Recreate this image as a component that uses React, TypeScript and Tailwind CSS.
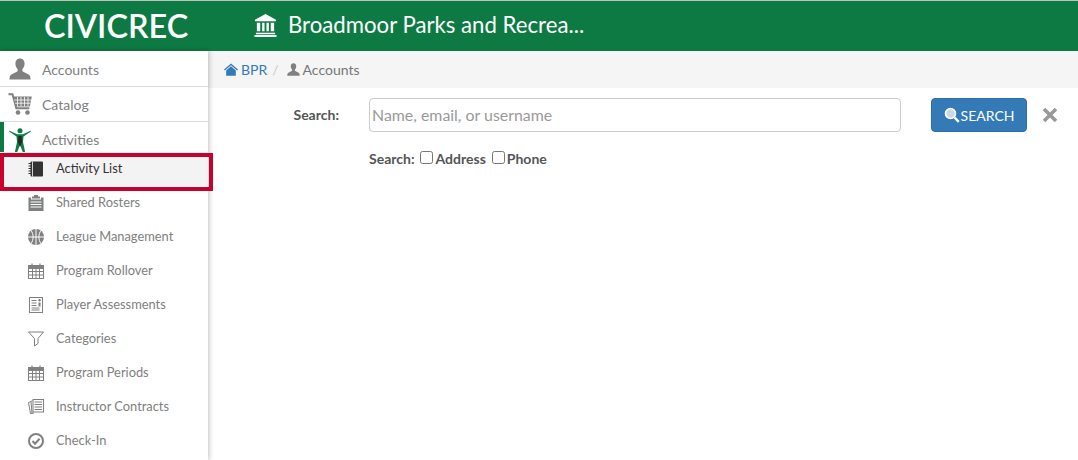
import React from "react";

const G = "#808080";

const Person = ({ className, fill = G }: { className?: string; fill?: string }) => (
  <svg viewBox="0 0 24 24" className={className} fill={fill}>
    <path d="M12 0.500c-3.200 0-5 2.400-5 5.600 0 2.400 1 4.800 2.400 6.200v2.100L2.600 18C1.200 18.800 0.600 20 0.500 23.500h23c-.1-3.500-.7-4.700-2.100-5.500l-6.800-3.600v-2.100C16 10.900 17 8.500 17 6.100 17 2.900 15.200 0.500 12 0.500z" />
  </svg>
);

const Cart = ({ className }: { className?: string }) => (
  <svg viewBox="0 0 24 22" className={className} fill="none" stroke={G}>
    <path d="M0.500 1.200h4l.9 3.300 2.900 10.800h13" strokeWidth="2" />
    <path d="M5 3.500h18.800l-2 10H7.700z" fill={G} stroke="none" />
    <path d="M6 7h17M7 10.200h15.500M9.500 4v9.500M13 4v9.500M16.500 4v9.500M20 4v9.500" stroke="#ffffff" strokeWidth="0.800" />
    <circle cx="10" cy="19.500" r="2.300" fill={G} stroke="none" />
    <circle cx="19.500" cy="19.500" r="2.300" fill={G} stroke="none" />
  </svg>
);

const Figure = ({ className }: { className?: string }) => (
  <svg viewBox="0 0 22 26" className={className}>
    <circle cx="11" cy="2.800" r="2.500" fill="#0d7a43" />
    <path d="M0.200 3.500 L7.500 8.500 L8 14 L5.500 26 H7.500 L11 17 L14.500 26 H16.500 L14 14 L14.500 8.500 L21.800 3.500 L21.500 2.800 L14 6.300 H8 L0.500 2.800 Z" fill="#0d7a43" />
    <path d="M9.400 8h3.200l.4 6-2 5-2-5z" fill="#1d2b22" />
  </svg>
);

const Notebook = () => (
  <svg viewBox="0 0 16 16" className="w-4 h-4">
    <rect x="2.500" y="0.500" width="12.500" height="15" rx="1" fill="#333333" />
    <path d="M0.500 2.500h3.500M0.500 5h3.500M0.500 7.500h3.500M0.500 10h3.500M0.500 12.500h3.500" stroke="#333333" strokeWidth="1.200" />
    <path d="M4.500 0.500v15" stroke="#ffffff" strokeWidth="0.800" />
  </svg>
);

const Clipboard = () => (
  <svg viewBox="0 0 16 16" className="w-4 h-4" fill={G}>
    <path d="M6 0h4v1.500h2v2H4v-2h2z" />
    <path d="M0.500 2.500h2.500v2h10v-2h2.500V16H0.500z" />
    <path d="M2.500 7h11M2.500 9.500h11M2.500 12h11" stroke="#ffffff" strokeWidth="1" />
  </svg>
);

const Ball = () => (
  <svg viewBox="0 0 16 16" className="w-4 h-4">
    <circle cx="8" cy="8" r="8" fill={G} />
    <path d="M8 0v16M0 8h16M3 1.500c2.800 3.300 2.800 9.700 0 13M13 1.500c-2.800 3.300-2.800 9.700 0 13" stroke="#ffffff" strokeWidth="1" fill="none" />
  </svg>
);

const Calendar = () => (
  <svg viewBox="0 0 16 16" className="w-4 h-4" fill="none" stroke={G}>
    <rect x="0.500" y="2.500" width="15" height="13" strokeWidth="1" />
    <path d="M0.500 3h15v2.500H0.500z" fill={G} strokeWidth="1" />
    <path d="M4 0.500v3M12 0.500v3" strokeWidth="1.200" />
    <path d="M0.500 8.500h15M0.500 12h15M4.500 5.500v10M8 5.500v10M11.500 5.500v10" strokeWidth="1" />
  </svg>
);

const Assess = () => (
  <svg viewBox="0 0 16 16" className="w-4 h-4" fill="none" stroke={G}>
    <rect x="1.500" y="0.500" width="13" height="15" strokeWidth="1" />
    <path d="M3.500 3.500h5M3.500 6h5M3.500 8.500h5M3.500 11h8M3.500 13h8" strokeWidth="1" />
    <circle cx="11.500" cy="3.300" r="1.200" fill={G} stroke="none" />
    <path d="M10.500 5.500h2v4h-2z" fill={G} stroke="none" />
  </svg>
);

const Funnel = () => (
  <svg viewBox="0 0 16 16" className="w-4 h-4" fill="none" stroke={G} strokeWidth="1">
    <path d="M0.500 1h15L10 7.500v5L6.500 15V7.500z" />
  </svg>
);

const Contracts = () => (
  <svg viewBox="0 0 16 16" className="w-4 h-4" fill="none" stroke={G} strokeWidth="1">
    <path d="M3 2.500L0.500 3.500 2.500 14.500 6 14" />
    <path d="M4.500 1.500L3 2.500 4 14.500" />
    <rect x="5" y="0.500" width="10.500" height="12.500" fill="#ffffff" />
    <path d="M6.500 3h7.500M6.500 5.500h7.500M6.500 8h7.500M6.500 10.500h7.500" />
  </svg>
);

const Check = () => (
  <svg viewBox="0 0 16 16" className="w-4 h-4" fill="none" stroke={G}>
    <circle cx="8" cy="8" r="7" strokeWidth="2" />
    <path d="M4.500 8l2.500 2.700 4.600-5" strokeWidth="2" />
  </svg>
);

const Bank = () => (
  <svg viewBox="0 0 24 24" className="w-[23px] h-[23px]" fill="#ffffff">
    <path d="M12 0L23 6v1.500H1V6z" />
    <path d="M3 9h3.500v9H3zM8.500 9H11v9H8.500zM13 9h2.500v9H13zM17.500 9H21v9h-3.500z" />
    <path d="M2 19.500h20V21H2zM0.500 22H23.500v2H0.500z" />
  </svg>
);

const Home = () => (
  <svg viewBox="0 0 16 14" className="w-[14px] h-[13px]" fill="#337ab7">
    <path d="M8 0L16 7 15 8 8 2 1 8 0 7z" />
    <path d="M2.500 8L8 3.300 13.500 8v6h-11z" />
  </svg>
);

const Loupe = () => (
  <svg viewBox="0 0 16 16" className="w-4 h-4" fill="none" stroke="#ffffff">
    <circle cx="6.500" cy="6.500" r="5" strokeWidth="1.600" fill="#c9d9ea" />
    <path d="M10.500 10.500l4.300 4.300" strokeWidth="2.400" />
  </svg>
);

const subItems: [string, React.ReactNode][] = [
  ["Shared Rosters", <Clipboard />],
  ["League Management", <Ball />],
  ["Program Rollover", <Calendar />],
  ["Player Assessments", <Assess />],
  ["Categories", <Funnel />],
  ["Program Periods", <Calendar />],
  ["Instructor Contracts", <Contracts />],
  ["Check-In", <Check />],
];

export default function App() {
  return (
    <div
      className="flex flex-col h-[460px] w-[1078px] overflow-hidden bg-white text-[14px] text-[#777777]"
      style={{ fontFamily: "Lato, sans-serif" }}
    >
      <header className="flex items-center h-[51px] shrink-0 border-t border-[#b9c4bd] bg-[#0d7a43] text-white">
        <div className="w-[254px] pl-[44px] shrink-0 text-[32.4px] font-semibold leading-none">CIVICREC</div>
        <div className="flex items-center gap-[11px] mb-[2px]">
          <Bank />
          <span className="text-[22.2px] leading-none">Broadmoor Parks and Recrea...</span>
        </div>
      </header>
      <div className="flex flex-1 min-h-0">
        <aside className="w-[208px] shrink-0 shadow-[1px_0_5px_rgba(0,0,0,0.25)] z-10 bg-white text-[#808080]">
          <div className="flex items-center h-[36px] border-b border-[#dddddd]">
            <span className="w-[42px] flex justify-start pl-[9px] shrink-0"><Person className="w-[22px] h-[22px]" /></span>
            <span className="pt-[2px]">Accounts</span>
          </div>
          <div className="flex items-center h-[35px] border-b border-[#dddddd]">
            <span className="w-[42px] flex justify-start pl-[8px] shrink-0"><Cart className="w-[24px] h-[22px]" /></span>
            <span>Catalog</span>
          </div>
          <div className="flex items-start h-[30px] border-l-4 border-[#0d7a43] overflow-hidden">
            <span className="w-[38px] flex justify-start pt-[6px] pl-[5px] shrink-0"><Figure className="w-[22px] h-[26px]" /></span>
            <span className="pt-[7px]">Activities</span>
          </div>
          <div className="relative flex items-center h-[34px] pl-[28px] bg-[#f3f3f3] text-[#333333] font-normal">
            <span className="w-[28px] shrink-0"><Notebook /></span>
            <span className="text-[12.85px]">Activity List</span>
            <div className="absolute left-0 top-[1px] w-[213px] h-[38px] border-4 border-[#c8002d]"></div>
          </div>
          {subItems.map(([label, icon]) => (
            <div key={label} className="flex items-center h-[34px] pl-[28px]">
              <span className="w-[28px] shrink-0">{icon}</span>
              <span className="text-[12.85px]">{label}</span>
            </div>
          ))}
        </aside>
        <main className="flex-1 min-w-0">
          <nav className="flex items-center h-[37px] bg-[#f5f5f5] pl-[16px]">
            <Home />
            <span className="ml-[3px] text-[#337ab7]">BPR</span>
            <span className="mx-[5px] text-[#cccccc]">/</span>
            <Person className="w-[13px] h-[13px] mr-[3px] ml-[3px]" />
            <span>Accounts</span>
          </nav>
          <div className="flex items-center mt-[10px] h-[34px]">
            <label className="w-[131px] shrink-0 text-right font-bold text-[#555555] mb-[2px]">Search:</label>
            <div className="ml-[30px] w-[532px] shrink-0 h-[34px] flex items-center rounded border border-[#cccccc] pl-[2px] text-[15.9px] text-[#999999]">
              Name, email, or username
            </div>
            <button className="ml-[30px] w-[96px] h-[34px] shrink-0 flex items-center justify-center gap-[1px] rounded bg-[#337ab7] border border-[#2e6da4] text-white text-[14px]">
              <Loupe />
              <span>SEARCH</span>
            </button>
            <span className="ml-[15px]">
              <svg viewBox="0 0 16 16" className="w-[16px] h-[16px]" fill="none" stroke="#999999" strokeWidth="3.600">
                <path d="M2 2l12 12M14 2L2 14" />
              </svg>
            </span>
          </div>
          <div className="flex items-center mt-[15px] ml-[161px] h-[22px] font-bold text-[#555555]">
            <span>Search:</span>
            <input type="checkbox" readOnly className="ml-[5px] w-[13px] h-[13px] mb-[2px]" />
            <span className="ml-[3px]">Address</span>
            <input type="checkbox" readOnly className="ml-[6px] w-[13px] h-[13px] mb-[2px]" />
            <span className="ml-[2px]">Phone</span>
          </div>
        </main>
      </div>
    </div>
  );
}
